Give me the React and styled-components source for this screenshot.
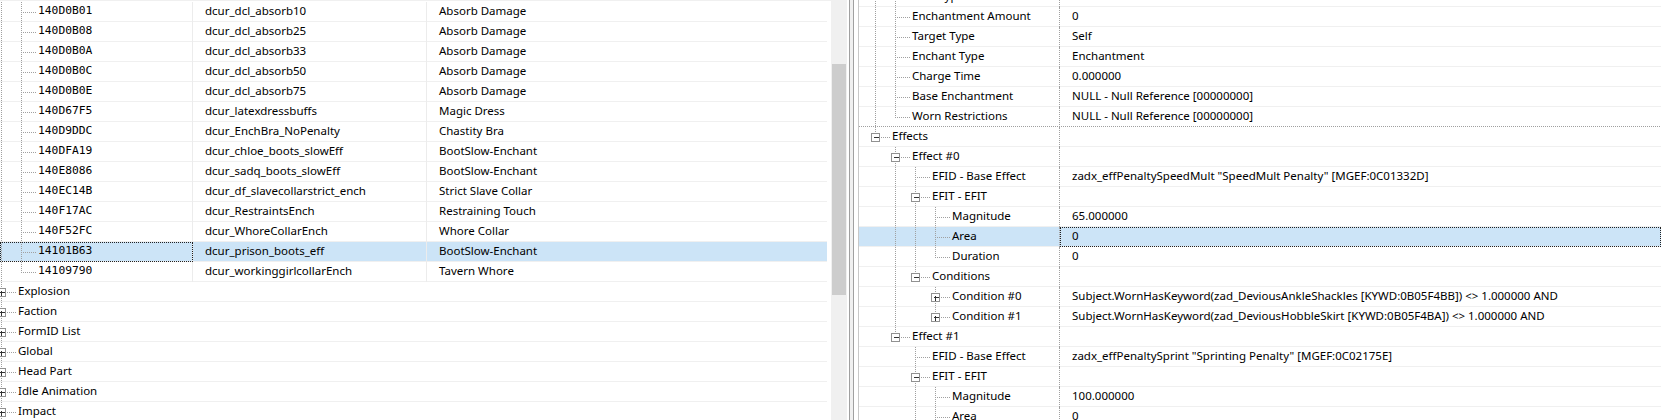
import React from "react";
import styled, { createGlobalStyle } from "styled-components";

const LINE = "#a0a0a0";
const GRID = "#f0f0f0";
const SELECTED = "#cce4f7";

const GlobalStyle = createGlobalStyle`
  html, body { margin: 0; padding: 0; background: #ffffff; }
  body {
    font-family: "Noto Sans", "Open Sans", "Liberation Sans", sans-serif;
    font-size: 11.5px;
    color: #000;
  }
`;

// turns a nested tree into visible rows, remembering which ancestor lines go on
function flatten(nodes, depth = 0, guides = []) {
  return nodes.flatMap((node, i) => {
    const last = i === nodes.length - 1 && !node.more;
    const row = { ...node, depth, guides, last };
    const kids =
      node.open && node.children
        ? flatten(node.children, depth + 1, [...guides, !last])
        : [];
    return [row, ...kids];
  });
}

const enchantments = [
  ["140D0B01", "dcur_dcl_absorb10", "Absorb Damage"],
  ["140D0B08", "dcur_dcl_absorb25", "Absorb Damage"],
  ["140D0B0A", "dcur_dcl_absorb33", "Absorb Damage"],
  ["140D0B0C", "dcur_dcl_absorb50", "Absorb Damage"],
  ["140D0B0E", "dcur_dcl_absorb75", "Absorb Damage"],
  ["140D67F5", "dcur_latexdressbuffs", "Magic Dress"],
  ["140D9DDC", "dcur_EnchBra_NoPenalty", "Chastity Bra"],
  ["140DFA19", "dcur_chloe_boots_slowEff", "BootSlow-Enchant"],
  ["140E8086", "dcur_sadq_boots_slowEff", "BootSlow-Enchant"],
  ["140EC14B", "dcur_df_slavecollarstrict_ench", "Strict Slave Collar"],
  ["140F17AC", "dcur_RestraintsEnch", "Restraining Touch"],
  ["140F52FC", "dcur_WhoreCollarEnch", "Whore Collar"],
  ["14101B63", "dcur_prison_boots_eff", "BootSlow-Enchant"],
  ["14109790", "dcur_workinggirlcollarEnch", "Tavern Whore"],
];

const pluginTree = [
  {
    label: "Enchantment",
    open: true,
    children: enchantments.map(([id, editorId, name]) => ({
      id,
      editorId,
      name,
      selected: id === "14101B63",
    })),
  },
  { label: "Explosion", closed: true },
  { label: "Faction", closed: true },
  { label: "FormID List", closed: true },
  { label: "Global", closed: true },
  { label: "Head Part", closed: true },
  { label: "Idle Animation", closed: true },
  { label: "Impact", closed: true, more: true },
];

const recordTree = [
  {
    label: "ENIT - Effect Data",
    open: true,
    children: [
      { label: "Cast Type", value: "Constant Effect" },
      { label: "Enchantment Amount", value: "0" },
      { label: "Target Type", value: "Self" },
      { label: "Enchant Type", value: "Enchantment" },
      { label: "Charge Time", value: "0.000000" },
      { label: "Base Enchantment", value: "NULL - Null Reference [00000000]" },
      {
        label: "Worn Restrictions",
        value: "NULL - Null Reference [00000000]",
        divider: true,
      },
    ],
  },
  {
    label: "Effects",
    open: true,
    children: [
      {
        label: "Effect #0",
        open: true,
        children: [
          {
            label: "EFID - Base Effect",
            value: 'zadx_effPenaltySpeedMult "SpeedMult Penalty" [MGEF:0C01332D]',
          },
          {
            label: "EFIT - EFIT",
            open: true,
            children: [
              { label: "Magnitude", value: "65.000000" },
              { label: "Area", value: "0", selected: true },
              { label: "Duration", value: "0" },
            ],
          },
          {
            label: "Conditions",
            open: true,
            children: [
              {
                label: "Condition #0",
                closed: true,
                value:
                  "Subject.WornHasKeyword(zad_DeviousAnkleShackles [KYWD:0B05F4BB]) <> 1.000000 AND",
              },
              {
                label: "Condition #1",
                closed: true,
                value:
                  "Subject.WornHasKeyword(zad_DeviousHobbleSkirt [KYWD:0B05F4BA]) <> 1.000000 AND",
              },
            ],
          },
        ],
      },
      {
        label: "Effect #1",
        open: true,
        children: [
          {
            label: "EFID - Base Effect",
            value: 'zadx_effPenaltySprint "Sprinting Penalty" [MGEF:0C02175E]',
          },
          {
            label: "EFIT - EFIT",
            open: true,
            more: true,
            children: [
              { label: "Magnitude", value: "100.000000" },
              { label: "Area", value: "0", more: true },
            ],
          },
        ],
      },
    ],
  },
];

const pluginRows = flatten(pluginTree).slice(1);
const recordRows = flatten(recordTree).slice(1);

/* ---------- tree connector drawing ---------- */

const GuideSvg = styled.svg`
  flex: none;
  display: block;
  margin-left: ${(p) => p.$offset || 0}px;
  line {
    stroke: ${LINE};
    stroke-width: 1;
    stroke-dasharray: 1 1;
    shape-rendering: crispEdges;
  }
  rect {
    fill: #fff;
    stroke: #919191;
    shape-rendering: crispEdges;
  }
  path {
    stroke: #333;
    stroke-width: 1;
    fill: none;
    shape-rendering: crispEdges;
  }
`;

function Guides({ guides, last, toggle, offset }) {
  const x = guides.length * 20 + 10.5;
  return (
    <GuideSvg $offset={offset} width={guides.length * 20 + 27} height={20}>
      {guides.map(
        (on, i) =>
          on && <line key={i} x1={i * 20 + 10.5} x2={i * 20 + 10.5} y1={0} y2={20} />
      )}
      <line x1={x} x2={x} y1={0} y2={last ? 11 : 20} />
      <line x1={x + 1} x2={x + 14} y1={10.5} y2={10.5} />
      {toggle && (
        <>
          <rect x={x - 4} y={6.5} width={8} height={8} />
          <path
            d={
              toggle === "closed"
                ? `M${x - 2} 10.5H${x + 3}M${x} 8.5V13.5`
                : `M${x - 2} 10.5H${x + 3}`
            }
          />
        </>
      )}
    </GuideSvg>
  );
}

const toggleOf = (row) => (row.closed ? "closed" : row.open ? "open" : null);

/* ---------- layout ---------- */

const Window = styled.div`
  display: flex;
  width: 1661px;
  height: 420px;
  overflow: hidden;
  background: #fff;
`;

const LeftPane = styled.div`
  display: flex;
  flex: none;
  width: 847px;
  height: 100%;
`;

const List = styled.div`
  width: 831px;
  padding-top: 2px;
  overflow: hidden;
  box-shadow: inset 0 2px 0 -1px ${GRID};
`;

const ListRow = styled.div`
  display: flex;
  align-items: center;
  width: 827px;
  height: 20px;
  overflow: hidden;
  white-space: nowrap;
  background: ${(p) => (p.$selected ? SELECTED : "transparent")};
  box-shadow: inset 0 -1px 0 ${GRID};
`;

const Cell = styled.div`
  display: flex;
  align-items: center;
  flex: none;
  width: ${(p) => p.$width}px;
  height: 100%;
  padding-left: ${(p) => (p.$pad ? 12 : 0)}px;
  box-sizing: border-box;
  overflow: hidden;
  border-right: ${(p) => (p.$last ? "none" : "1px solid #ececec")};
  outline: ${(p) => (p.$focused ? "1px dotted #222" : "none")};
  outline-offset: -1px;
`;

// text sits a pixel above the row's middle, as the native control draws it
const Label = styled.span`
  line-height: 18px;
  margin-bottom: 2px;
  font-family: ${(p) =>
    p.$mono ? `"DejaVu Sans Mono", "Liberation Mono", monospace` : "inherit"};
  font-size: ${(p) => (p.$mono ? "11.3px" : "inherit")};
`;

const Scrollbar = styled.div`
  flex: none;
  width: 16px;
  height: 100%;
  box-sizing: border-box;
  padding-top: 64px;
  background: #f0f0f0;
`;

const Thumb = styled.div`
  height: 231px;
  margin: 0 1px;
  background: #cdcdcd;
`;

const Splitter = styled.div`
  flex: none;
  width: 11px;
  height: 100%;
  background: linear-gradient(
    to right,
    #fff 0 2px,
    #a0a0a0 2px 3px,
    #f0f0f0 3px 6px,
    #a0a0a0 6px 7px,
    #fff 7px 11px
  );
`;

const RightPane = styled.div`
  flex: 1;
  height: 100%;
  overflow: hidden;
  border-left: 1px solid #c8c8c8;
`;

const Fields = styled.div`
  margin-top: -13px;
`;

const FieldRow = styled.div`
  display: flex;
  height: 20px;
  white-space: nowrap;
  background-color: ${(p) => (p.$selected ? SELECTED : "transparent")};
  box-shadow: ${(p) => (p.$divider ? "none" : `inset 0 -1px 0 ${GRID}`)};
  background-image: ${(p) =>
    p.$divider ? `linear-gradient(to right, ${LINE} 50%, transparent 50%)` : "none"};
  background-size: 2px 1px;
  background-repeat: repeat-x;
  background-position: left bottom;
`;

const LabelCell = styled.div`
  display: flex;
  align-items: center;
  flex: none;
  width: 201px;
  padding-left: 6px;
  box-sizing: border-box;
  overflow: hidden;
  border-right: 1px dotted ${LINE};
`;

const ValueCell = styled.div`
  display: flex;
  align-items: center;
  flex: 1;
  padding-left: 12px;
  overflow: hidden;
  outline: ${(p) => (p.$focused ? "1px dotted #222" : "none")};
  outline-offset: -1px;
`;

function PluginRow({ row }) {
  if (!row.id) {
    return (
      <ListRow>
        <Guides guides={row.guides} last={row.last} toggle={toggleOf(row)} offset={-9} />
        <Label>{row.label}</Label>
      </ListRow>
    );
  }
  return (
    <ListRow $selected={row.selected}>
      <Cell $width={193} $focused={row.selected}>
        <Guides guides={row.guides} last={row.last} offset={-9} />
        <Label $mono>{row.id}</Label>
      </Cell>
      <Cell $width={234} $pad>
        <Label>{row.editorId}</Label>
      </Cell>
      <Cell $width={400} $pad $last>
        <Label>{row.name}</Label>
      </Cell>
    </ListRow>
  );
}

function RecordRow({ row }) {
  return (
    <FieldRow $selected={row.selected} $divider={row.divider}>
      <LabelCell>
        <Guides guides={row.guides} last={row.last} toggle={toggleOf(row)} />
        <Label>{row.label}</Label>
      </LabelCell>
      <ValueCell $focused={row.selected}>
        <Label>{row.value}</Label>
      </ValueCell>
    </FieldRow>
  );
}

export default function App() {
  return (
    <>
      <GlobalStyle />
      <Window>
        <LeftPane>
          <List>
            {pluginRows.map((row, i) => (
              <PluginRow key={i} row={row} />
            ))}
          </List>
          <Scrollbar>
            <Thumb />
          </Scrollbar>
        </LeftPane>
        <Splitter />
        <RightPane>
          <Fields>
            {recordRows.map((row, i) => (
              <RecordRow key={i} row={row} />
            ))}
          </Fields>
        </RightPane>
      </Window>
    </>
  );
}
